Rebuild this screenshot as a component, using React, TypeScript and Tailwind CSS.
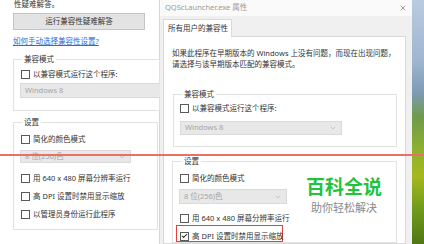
import { Check, ChevronDown, X } from "lucide-react";

const font = { fontFamily: '"Noto Sans", "Noto Sans CJK SC", sans-serif' };

function Box({ checked }: { checked?: boolean }) {
  return (
    <span className="flex h-[9px] w-[9px] shrink-0 items-center justify-center border border-[#5a5a5a] bg-white">
      {checked && <Check size={8} strokeWidth={3.5} className="text-[#222]" />}
    </span>
  );
}

function Row({ label, checked, className = "" }: { label: string; checked?: boolean; className?: string }) {
  return (
    <div className={`flex h-[10px] items-center gap-[3px] ${className}`}>
      <Box checked={checked} />
      <span className="whitespace-nowrap text-[7.5px] leading-[10px] text-[#333]">{label}</span>
    </div>
  );
}

function Select({ label, className = "", chevron = true }: { label: string; className?: string; chevron?: boolean }) {
  return (
    <div className={`flex items-center justify-between border border-[#dadada] bg-[#e8e8e8] pl-[4px] pr-[4px] ${className}`}>
      <span className="whitespace-nowrap text-[7.5px] text-[#a5a5a5]">{label}</span>
      {chevron && <ChevronDown size={8} className="text-[#b5b5b5]" />}
    </div>
  );
}

function Group({ title, className = "", children }: { title: string; className?: string; children: React.ReactNode }) {
  return (
    <fieldset className={`border border-[#e2e2e2] ${className}`}>
      <legend className="ml-[2px] px-[2px] text-[7.5px] leading-[10px] text-[#333]">{title}</legend>
      {children}
    </fieldset>
  );
}

export default function App() {
  return (
    <div className="relative flex h-[244px] w-[424px] overflow-hidden bg-white" style={font}>
      {/* background window */}
      <div className="flex h-full w-[160px] shrink-0 flex-col border-r border-[#d6d6d6] bg-white pl-[13px] pr-[3px]">
        <div className="ml-[1px] mt-[-1px] text-[7.5px] leading-[10px] text-[#333]">性疑难解答。</div>
        <div className="mt-[4px] flex h-[17px] w-[132px] items-center justify-center border border-[#c4c4c4] bg-[#e3e3e3] text-[7.5px] text-[#333]">
          运行兼容性疑难解答
        </div>
        <div className="mt-[6px] text-[7.5px] leading-[10px] text-[#2a6fd0] underline">如何手动选择兼容性设置?</div>
        <Group title="兼容模式" className="mt-[8px] -mr-[4px] pl-[6px] pb-[12px]">
          <Row label="以兼容模式运行这个程序:" className="mt-[5px] ml-[1px]" />
          <Select label="Windows 8" chevron={false} className="mt-[4px] h-[15px] -mr-[2px]" />
        </Group>
        <Group title="设置" className="mt-[6px] -mr-[2px] pl-[6px] pb-[10px]">
          <Row label="简化的颜色模式" className="mt-[7px] ml-[1px]" />
          <Select label="8 位(256)色" className="mt-[6px] h-[13px] w-[111px]" />
          <Row label="用 640 x 480 屏幕分辨率运行" className="mt-[10px] ml-[1px]" />
          <Row label="高 DPI 设置时禁用显示缩放" className="mt-[8px] ml-[1px]" />
          <Row label="以管理员身份运行此程序" className="mt-[8px] ml-[1px]" />
        </Group>
      </div>

      {/* front window */}
      <div className="flex h-full w-[252px] shrink-0 flex-col bg-[#f0f0f0]">
        <div className="flex h-[18px] items-center justify-between bg-[#fafafa] pl-[5px] pr-[5px]">
          <span className="text-[7.5px] text-[#9a9a9a]">QQScLauncher.exe 属性</span>
          <X size={8} strokeWidth={1.5} className="text-[#444]" />
        </div>
        <div className="mt-[3px] flex pl-[3px]">
          <div className="relative z-10 -mb-px flex h-[18px] w-[69px] items-center border border-b-0 border-[#d9d9d9] bg-white pl-[4px] text-[7.5px] text-[#333]">
            所有用户的兼容性
          </div>
        </div>
        <div className="ml-[3px] mr-[6px] flex flex-1 flex-col border border-[#d9d9d9] bg-white pl-[8px] pr-[8px] pt-[11px]">
          <div className="whitespace-nowrap text-[7.5px] leading-[11px] text-[#333]">
            如果此程序在早期版本的 Windows 上没有问题，而现在出现问题，
            <br />
            请选择与该早期版本匹配的兼容模式。
          </div>
          <Group title="兼容模式" className="mt-[19px] ml-[1px] pl-[6px] pr-[54px] pb-[11px]">
            <Row label="以兼容模式运行这个程序:" className="mt-[4px]" />
            <Select label="Windows 8" className="mt-[8px] h-[14px]" />
          </Group>
          <Group title="设置" className="mt-[9px] pl-[7px]">
            <Row label="简化的颜色模式" className="mt-[7px]" />
            <Select label="8 位(256)色" className="mt-[6px] h-[15px] w-[108px] -ml-[1px]" />
            <Row label="用 640 x 480 屏幕分辨率运行" className="mt-[9px]" />
            <div className="-ml-[4px] mt-[2px] w-[107px] border border-[#e0453d] pl-[3px] pt-[5px]">
              <Row label="高 DPI 设置时禁用显示缩放" checked />
            </div>
          </Group>
        </div>
      </div>

      {/* desktop wallpaper */}
      <div className="h-full flex-1 bg-[linear-gradient(180deg,#b9cbe0_0%,#9fb6cf_25%,#7e9ab5_38%,#6f9a4a_48%,#8fb22e_62%,#a6b81f_72%,#6f9a1c_86%,#4f7614_100%)]" />

      {/* annotation line */}
      <div className="absolute left-0 top-[154px] h-[2px] w-full bg-[#ea6f66]" />

      {/* watermark */}
      <div className="absolute left-[306px] top-[175px] flex flex-col items-center gap-[2px]">
        <div className="text-[19px] font-bold leading-[24px] text-[#1fc43a]">百科全说</div>
        <div className="text-[11px] leading-[14px] text-[#8a8a8a]">助你轻松解决</div>
      </div>
    </div>
  );
}
